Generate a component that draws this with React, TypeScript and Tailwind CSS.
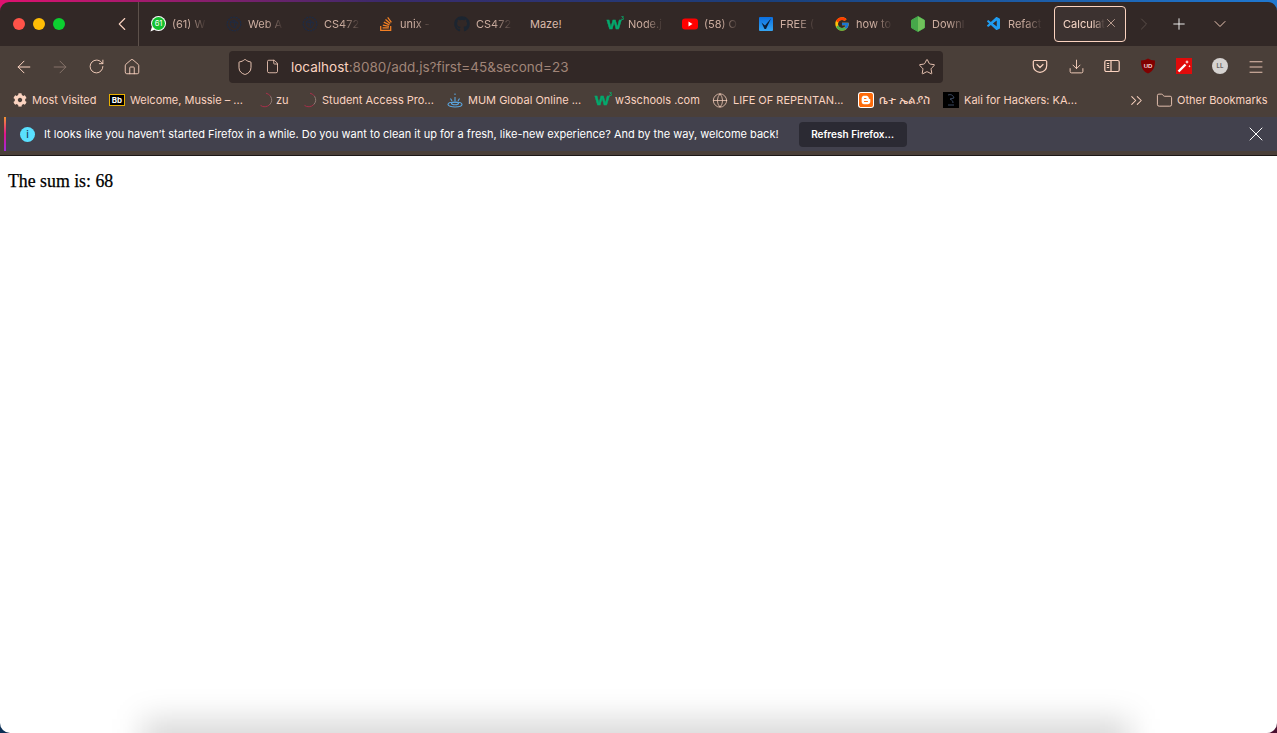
import {
  ArrowLeft,
  ArrowRight,
  ChevronDown,
  ChevronLeft,
  ChevronRight,
  ChevronsRight,
  Download,
  File,
  Folder,
  Globe,
  House,
  Menu,
  Plus,
  RotateCw,
  Shield,
  Star,
  X,
} from "lucide-react";
import { FaBlogger, FaCog, FaGithub, FaStackOverflow } from "react-icons/fa";
import { FcGoogle } from "react-icons/fc";
import { VscVscode } from "react-icons/vsc";

const SANS = "font-['Inter','Liberation_Sans',sans-serif]";

/* ---------- FAVICONS ---------- */

function WhatsApp() {
  return (
    <svg width="16" height="16" viewBox="0 0 16 16">
      <circle cx="8.500" cy="7.500" r="7.500" fill="#fff" />
      <path d="M0.500 15.500l1.500-5 3 3z" fill="#fff" />
      <circle cx="8.500" cy="7.500" r="6.500" fill="#12c12e" />
      <text x="8.500" y="10.300" textAnchor="middle" fontSize="7.500" fill="#fff" fontFamily="Inter">
        61
      </text>
    </svg>
  );
}

function SpikyBall() {
  return (
    <svg width="16" height="16" viewBox="0 0 16 16" fill="none" stroke="#1d2b45" strokeWidth="1.2">
      <circle cx="8" cy="8" r="6.8" strokeDasharray="2 0.8" />
      <path d="M4 6l4-2 4 3-3 5-4-2zM8 4l1 8M4 6l8 1" strokeWidth="0.8" />
    </svg>
  );
}

function W3() {
  return (
    <span className="relative flex h-4 w-4 items-center justify-center text-[13px] leading-none font-black text-[#04a96d] [font-family:'Liberation_Sans',sans-serif]">
      <span className="inline-block scale-x-[1.2] [-webkit-text-stroke:0.4px_#04a96d]">W</span>
      <span className="absolute top-0 -right-[2px] text-[5px] font-bold">3</span>
    </span>
  );
}

function YouTube() {
  return (
    <svg width="16" height="16" viewBox="0 0 16 16">
      <rect x="0" y="2.500" width="16" height="11" rx="3" fill="#ff0000" />
      <path d="M6.500 5.500l4 2.500-4 2.500z" fill="#fff" />
    </svg>
  );
}

function CheckBox() {
  return (
    <svg width="16" height="16" viewBox="0 0 16 16">
      <defs>
        <linearGradient id="chk" x1="0" y1="0" x2="0" y2="1">
          <stop offset="0" stopColor="#0b6fe0" />
          <stop offset="1" stopColor="#35a4f0" />
        </linearGradient>
      </defs>
      <rect x="1" y="1" width="14" height="14" rx="1" fill="url(#chk)" />
      <path d="M3.500 6.500l3.500 3 6-7-5 10.500h-1.500z" fill="#0b1f38" />
    </svg>
  );
}

function NodeHex() {
  return (
    <svg width="16" height="16" viewBox="0 0 16 16">
      <path d="M8 0.500l6.500 3.700v7.600L8 15.500l-6.500-3.700V4.200z" fill="#46a84a" stroke="#46a84a" strokeLinejoin="round" />
      <path d="M8 0.500l6.500 3.700v7.600L8 15.500z" fill="#70c25b" />
    </svg>
  );
}

function Pocket() {
  return (
    <svg width="16" height="16" viewBox="0 0 16 16" fill="none" stroke="#fbd3c0" strokeWidth="1.2">
      <path d="M2.500 2.500h11a1.200 1.200 0 0 1 1.200 1.200v4a6.700 6.700 0 0 1-13.400 0v-4a1.200 1.200 0 0 1 1.200-1.200z" />
      <path d="M5 6.500l3 3 3-3" strokeLinecap="round" strokeLinejoin="round" />
    </svg>
  );
}

function SidebarIcon() {
  return (
    <svg width="16" height="16" viewBox="0 0 16 16" fill="none" stroke="#fbd3c0" strokeWidth="1.2">
      <rect x="0.800" y="2.500" width="14.400" height="11" rx="1.500" />
      <path d="M7 2.500v11M2.800 5.500h2.400M2.800 7.500h2.400M2.800 9.500h2.400" />
    </svg>
  );
}

function UBlock() {
  return (
    <svg width="16" height="16" viewBox="0 0 16 16">
      <path d="M1 2.500C4 2.500 6 1.500 8 0.500c2 1 4 2 7 2 0 6-1 10.500-7 13-6-2.500-7-7-7-13z" fill="#800000" />
      <text x="8" y="9.500" textAnchor="middle" fontSize="6" fontWeight="700" fill="#f3d6d6" fontFamily="Liberation Sans">
        UD
      </text>
    </svg>
  );
}

function Wand() {
  return (
    <svg width="16" height="16" viewBox="0 0 16 16">
      <rect width="16" height="16" fill="#e00b0b" />
      <path d="M2.500 13.500l7-7" stroke="#fff" strokeWidth="2.400" />
      <path d="M11 2l.6 1.400L13 4l-1.400.6L11 6l-.6-1.400L9 4l1.400-.6zM13.500 7l.4.8.8.4-.8.400-.4.800-.4-.800-.8-.400.8-.400z" fill="#fff" />
    </svg>
  );
}

function Spinner() {
  return (
    <svg width="16" height="16" viewBox="0 0 16 16" fill="none" strokeWidth="1">
      <path d="M9 1.200a7 7 0 0 1 4.500 3" stroke="#a5304a" />
      <path d="M13.500 4.200a7 7 0 0 1 -1 8.600" stroke="#8f7a74" />
      <path d="M12.500 12.800a7 7 0 0 1 -9 .6" stroke="#a5304a" />
    </svg>
  );
}

function Bowl() {
  return (
    <svg width="16" height="16" viewBox="0 0 16 16" fill="none" stroke="#5aa6e0" strokeWidth="1.100">
      <ellipse cx="8" cy="12.500" rx="7" ry="2.500" />
      <ellipse cx="8" cy="11.500" rx="3.500" ry="1.200" />
      <path d="M8 9V5M5 9L3.500 6.500M11 9l1.500-2.500M8 3V1.500" />
    </svg>
  );
}

function Kali() {
  return (
    <span className="flex h-4 w-4 items-center justify-center bg-black">
      <svg width="12" height="14" viewBox="0 0 12 14" fill="none" stroke="#4a5a78" strokeWidth="0.8">
        <path d="M3 2c3-1 5 0 6 3l-4 1c2 1 3 2 3 4M3 12h6" />
      </svg>
    </span>
  );
}

/* ---------- TABS ---------- */

const tabs = [
  { label: "(61) W", icon: <WhatsApp /> },
  { label: "Web A", icon: <SpikyBall /> },
  { label: "CS472", icon: <SpikyBall /> },
  { label: "unix -", icon: <FaStackOverflow size={16} color="#f48024" /> },
  { label: "CS472", icon: <FaGithub size={16} color="#1c2530" /> },
  { label: "Maze!", icon: null },
  { label: "Node.j", icon: <W3 /> },
  { label: "(58) O", icon: <YouTube /> },
  { label: "FREE (", icon: <CheckBox /> },
  { label: "how to", icon: <FcGoogle size={16} /> },
  { label: "Downl", icon: <NodeHex /> },
  { label: "Refact", icon: <VscVscode size={16} color="#1f9cf0" /> },
];

function Tab({ label, icon }: { label: string; icon: React.ReactNode }) {
  if (!icon) {
    return (
      <div className="flex h-full w-[76px] shrink-0 items-center pt-[1px] pl-2 text-[11px] text-[#d9b9aa]">
        {label}
      </div>
    );
  }
  return (
    <div className="flex h-full w-[76px] shrink-0 items-center gap-[6px] pl-2">
      <span className="flex h-4 w-4 shrink-0 items-center justify-center">{icon}</span>
      <span className="pt-[1px] text-[11px] whitespace-nowrap text-[#cdaea0] [mask-image:linear-gradient(to_right,black_50%,transparent_105%)]">
        {label}
      </span>
    </div>
  );
}

/* ---------- BOOKMARKS ---------- */

function Bookmark({
  icon,
  children,
  width,
}: {
  icon: React.ReactNode;
  children: React.ReactNode;
  width: string;
}) {
  return (
    <div className={`flex shrink-0 items-center gap-[5px] ${width}`}>
      <span className="flex h-4 w-4 shrink-0 items-center justify-center">{icon}</span>
      <span className="whitespace-nowrap">{children}</span>
    </div>
  );
}

export default function App() {
  return (
    <div className={`flex h-[733px] w-[1277px] flex-col overflow-hidden bg-[linear-gradient(to_right,#0b2f55,#4a1030)] ${SANS}`}>
      {/* WINDOW CHROME */}
      <header className="shrink-0 bg-[linear-gradient(to_right,#e0116f,#3a2a6a_30%,#1a3f7a_60%,#1f78d1)] pt-[2px]">
        <div className="overflow-hidden rounded-t-[9px]">
          {/* TAB BAR */}
          <div className="flex h-[44px] items-center bg-[#322826]">
            <div className="flex h-full w-[139px] shrink-0 items-center border-r border-[#5d514b] pl-[13px]">
              <span className="h-3 w-3 rounded-full bg-[#ff5349]" />
              <span className="ml-2 h-3 w-3 rounded-full bg-[#ffbd05]" />
              <span className="ml-2 h-3 w-3 rounded-full bg-[#0ccf30]" />
              <ChevronLeft size={22} strokeWidth={1.2} color="#fbd3c0" className="ml-[46px]" />
            </div>
            <div className="ml-[3px] flex h-full">
              {tabs.map((t, i) => (
                <Tab key={i} label={t.label} icon={t.icon} />
              ))}
            </div>
            <div className="flex h-[36px] w-[72px] shrink-0 items-center rounded-[4px] border border-[#fbd3c0] bg-[#3c3230] pl-2 text-[11px] text-[#f7d6c6]">
              <span className="w-[42px] whitespace-nowrap [mask-image:linear-gradient(to_right,black_70%,transparent)]">
                Calculat
              </span>
              <X size={14} strokeWidth={1.1} color="#fbd3c0" className="-mt-[2px] -ml-[1px]" />
            </div>
            <ChevronRight size={20} strokeWidth={1.2} color="#5a4e49" className="ml-2" />
            <Plus size={18} strokeWidth={1.2} color="#fff" className="ml-[16px]" />
            <ChevronDown size={20} strokeWidth={1.1} color="#fbd3c0" className="ml-[22px]" />
          </div>

          {/* TOOLBAR */}
          <div className="flex h-[39px] items-center bg-[#4a3f39] pt-[2px] pr-[3px] pl-[6px] text-[#fbd3c0]">
            <div className="flex w-[36px] justify-center">
              <ArrowLeft size={20} strokeWidth={1.2} />
            </div>
            <div className="flex w-[36px] justify-center">
              <ArrowRight size={20} strokeWidth={1.2} color="#86736a" />
            </div>
            <div className="flex w-[36px] justify-center">
              <RotateCw size={17} strokeWidth={1.3} />
            </div>
            <div className="flex w-[36px] justify-center">
              <House size={18} strokeWidth={1.2} />
            </div>

            <div className="ml-[79px] flex h-[32px] w-[714px] shrink-0 items-center rounded-[4px] bg-[#322826] pr-[7px] pl-[7px]">
              <Shield size={18} strokeWidth={1.2} />
              <File size={15} strokeWidth={1.3} className="ml-[11px]" />
              <span className="ml-[11px] pt-[1px] text-[13.500px] text-[#a08578]">
                <span className="text-[#fbd3c0]">localhost</span>:8080/add.js?first=45&amp;second=23
              </span>
              <Star size={18} strokeWidth={1.2} className="ml-auto" />
            </div>

            <div className="ml-auto flex">
              <div className="flex w-[36px] justify-center"><Pocket /></div>
              <div className="flex w-[36px] justify-center"><Download size={17} strokeWidth={1.3} /></div>
              <div className="flex w-[36px] justify-center"><SidebarIcon /></div>
              <div className="flex w-[36px] justify-center"><UBlock /></div>
              <div className="flex w-[36px] justify-center"><Wand /></div>
              <div className="flex w-[36px] justify-center">
                <span className="flex h-4 w-4 items-center justify-center rounded-full bg-[#d6d3d1] text-[6px] font-bold text-[#6b6663]">
                  LL
                </span>
              </div>
              <div className="flex w-[36px] justify-center"><Menu size={18} strokeWidth={1.2} /></div>
            </div>
          </div>

          {/* BOOKMARKS */}
          <div className="flex h-[32px] items-center bg-[#4a3f39] pb-[2px] pl-[12px] text-[11px] text-[#fbd3c0]">
            <Bookmark width="w-[97px]" icon={<FaCog size={14} />}>
              <span className="-ml-[1px] block">Most Visited</span>
            </Bookmark>
            <Bookmark
              width="w-[148px]"
              icon={
                <span className="flex h-[12px] w-4 items-center justify-center border border-[#e9b000] bg-black text-[8px] font-bold text-white">
                  Bb
                </span>
              }
            >
              Welcome, Mussie – ...
            </Bookmark>
            <Bookmark width="w-[44px]" icon={<Spinner />}>
              <span className="-ml-[2px] block">zu</span>
            </Bookmark>
            <Bookmark width="w-[146px]" icon={<Spinner />}>
              Student Access Pro...
            </Bookmark>
            <Bookmark width="w-[147px]" icon={<Bowl />}>
              MUM Global Online ...
            </Bookmark>
            <Bookmark width="w-[118px]" icon={<W3 />}>
              w3schools .com
            </Bookmark>
            <Bookmark width="w-[146px]" icon={<Globe size={17} strokeWidth={1.1} />}>
              LIFE OF REPENTAN...
            </Bookmark>
            <Bookmark
              width="w-[85px]"
              icon={
                <span className="flex h-4 w-4 items-center justify-center rounded-[3px] bg-white">
                  <FaBlogger size={16} color="#ff6b0a" />
                </span>
              }
            >
              <span className="text-[12px]">ቤተ ኤልያስ</span>
            </Bookmark>
            <Bookmark width="w-[184px]" icon={<Kali />}>
              Kali for Hackers: KA...
            </Bookmark>
            <ChevronsRight size={19} strokeWidth={1.3} />
            <div className="ml-[10px] flex items-center gap-[4px]">
              <Folder size={17} strokeWidth={1.2} />
              <span className="whitespace-nowrap">Other Bookmarks</span>
            </div>
          </div>

          {/* NOTIFICATION */}
          <div className="bg-[#4a3f39] pb-[4px] pl-[4px]">
            <div className="flex h-[34px] items-center border-l-2 border-transparent bg-[#42414d] [border-image:linear-gradient(to_bottom,#f59e2b,#e0148c,#9a2be0)_1]">
              <span className="ml-[14px] flex h-[15px] w-[15px] items-center justify-center rounded-full bg-[#59e0ff] text-[10px] font-medium text-[#1c3a60]">
                i
              </span>
              <span className="ml-[9px] text-[11px] whitespace-nowrap text-white">
                It looks like you haven’t started Firefox in a while. Do you want to clean it up for a fresh, like-new experience? And by the way, welcome back!
              </span>
              <span className="ml-[20px] flex h-[25px] w-[108px] items-center justify-center rounded-[4px] bg-[#2b2a33] text-[10px] font-semibold text-white">
                Refresh Firefox…
              </span>
              <X size={24} strokeWidth={1} color="#fff" className="mr-[9px] ml-auto" />
            </div>
          </div>
        </div>
        <div className="h-px bg-[#1c1716]" />
      </header>

      {/* PAGE */}
      <main className="relative flex-1 overflow-hidden rounded-b-[10px] bg-white px-2 pt-[15px] text-[17.800px] leading-5 text-black [-webkit-text-stroke:0.25px_black] [font-family:'Liberation_Serif',serif]">
        The sum is: 68
        {/* DOCK SHADOW */}
        <div className="absolute right-[147px] -bottom-[30px] left-[142px] h-[44px] bg-black/[0.15] blur-[15px]" />
      </main>
    </div>
  );
}
